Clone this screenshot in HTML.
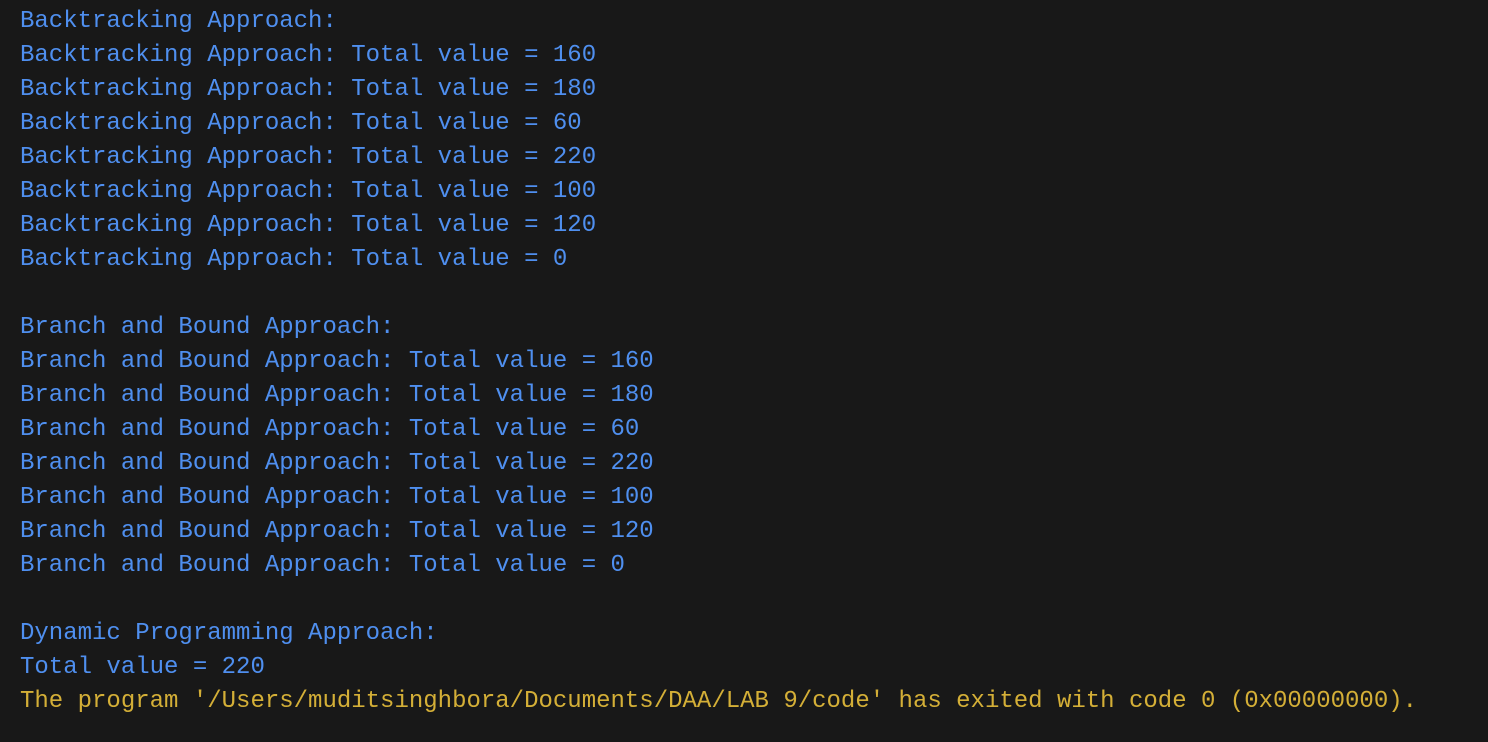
<!DOCTYPE html>
<html><head><style>
html,body{margin:0;padding:0;background:#181818;width:1488px;height:742px;overflow:hidden}
pre{margin:0;position:absolute;left:20px;top:5px;font-family:"Liberation Mono",monospace;font-size:24px;line-height:34px;color:#4f8fef;white-space:pre}
.y{color:#d4af37}
</style></head><body>
<pre>Backtracking Approach:
Backtracking Approach: Total value = 160
Backtracking Approach: Total value = 180
Backtracking Approach: Total value = 60
Backtracking Approach: Total value = 220
Backtracking Approach: Total value = 100
Backtracking Approach: Total value = 120
Backtracking Approach: Total value = 0

Branch and Bound Approach:
Branch and Bound Approach: Total value = 160
Branch and Bound Approach: Total value = 180
Branch and Bound Approach: Total value = 60
Branch and Bound Approach: Total value = 220
Branch and Bound Approach: Total value = 100
Branch and Bound Approach: Total value = 120
Branch and Bound Approach: Total value = 0

Dynamic Programming Approach:
Total value = 220
<span class="y">The program '/Users/muditsinghbora/Documents/DAA/LAB 9/code' has exited with code 0 (0x00000000).</span></pre>
</body></html>
